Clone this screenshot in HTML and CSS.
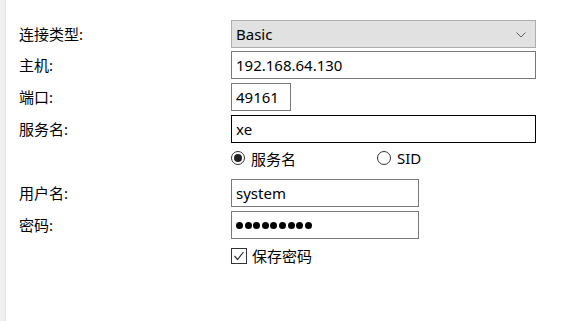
FILE: index.html
```html
<!DOCTYPE html>
<html lang="zh-CN">
<head>
<meta charset="utf-8">
<title>连接</title>
<link rel="stylesheet" href="styles.css">
</head>
<body>
<div class="page">
  <div class="strip"></div>
  <form class="form">
    <div class="row r-type">
      <div class="label">连接类型:</div>
      <div class="select">
        <span class="value">Basic</span>
        <svg class="chev" width="10" height="6" viewBox="0 0 10 6"><path d="M0.5 0.5 L5 5 L9.5 0.5" fill="none" stroke="#606060" stroke-width="1"/></svg>
      </div>
    </div>
    <div class="row r-host">
      <div class="label">主机:</div>
      <div class="input w-full">192.168.64.130</div>
    </div>
    <div class="row r-port">
      <div class="label">端口:</div>
      <div class="input w-port">49161</div>
    </div>
    <div class="row r-svc">
      <div class="label">服务名:</div>
      <div class="input w-full focused">xe</div>
    </div>
    <div class="row r-radio">
      <div class="label"></div>
      <div class="radios">
        <div class="radio-item first"><span class="radio checked"><span class="dot"></span></span><span>服务名</span></div>
        <div class="radio-item"><span class="radio"></span><span>SID</span></div>
      </div>
    </div>
    <div class="row r-user">
      <div class="label">用户名:</div>
      <div class="input w-half">system</div>
    </div>
    <div class="row r-pass">
      <div class="label">密码:</div>
      <div class="input w-half"><span class="dots"><i></i><i></i><i></i><i></i><i></i><i></i><i></i><i></i><i></i></span></div>
    </div>
    <div class="row r-check">
      <div class="label"></div>
      <div class="check-item">
        <span class="checkbox"><svg width="14" height="14" viewBox="0 0 14 14"><path d="M2.5 7 L5.5 10.5 L11.5 3" fill="none" stroke="#333" stroke-width="1.2"/></svg></span>
        <span>保存密码</span>
      </div>
    </div>
  </form>
</div>
</body>
</html>
```

FILE: styles.css
```css
html, body {
  margin: 0;
  padding: 0;
  background: #ffffff;
}
body {
  font-family: "Noto Sans", "Noto Sans CJK SC", sans-serif;
  font-size: 15px;
  color: #000;
  width: 562px;
  height: 321px;
  overflow: hidden;
}
.page {
  display: flex;
  height: 321px;
}
.strip {
  width: 5px;
  background: #f0f0f0;
  border-right: 1px solid #e4e4e4;
  flex: none;
}
.form {
  padding-left: 13px;
  padding-top: 20px;
  display: flex;
  flex-direction: column;
}
.row {
  display: grid;
  grid-template-columns: 212px auto;
  align-items: center;
}
.label {
  line-height: 20px;
  white-space: nowrap;
}
.r-host { margin-top: 3px; }
.r-port { margin-top: 4px; }
.r-svc { margin-top: 4px; }
.r-radio { margin-top: 4px; height: 22px; }
.r-user { margin-top: 10px; }
.r-pass { margin-top: 4px; }
.r-check { margin-top: 9px; height: 16px; }

.select {
  box-sizing: border-box;
  width: 305px;
  height: 28px;
  background: #e1e1e1;
  border: 1px solid #adadad;
  display: flex;
  align-items: center;
  justify-content: space-between;
  padding: 0 9px 0 4px;
}
.chev { margin-top: 1px; }
.input {
  box-sizing: border-box;
  height: 28px;
  border: 1px solid #7a7a7a;
  background: #fff;
  display: flex;
  align-items: center;
  padding-left: 4px;
  white-space: nowrap;
}
.w-full { width: 305px; }
.w-port { width: 60px; }
.w-half { width: 188px; }
.focused { border-color: #000; }

.radios {
  display: flex;
  align-items: center;
}
.radio-item {
  display: flex;
  align-items: center;
  gap: 6px;
}
.radio-item.first { width: 146px; }
.radio {
  box-sizing: border-box;
  width: 14px;
  height: 14px;
  border: 1px solid #333;
  border-radius: 50%;
  display: flex;
  align-items: center;
  justify-content: center;
}
.radio.checked { border-width: 1.5px; }
.dot {
  width: 8px;
  height: 8px;
  border-radius: 50%;
  background: #222;
}
.dots {
  display: flex;
  gap: 1.6px;
  padding-left: 0;
}
.dots i {
  width: 7px;
  height: 7px;
  border-radius: 50%;
  background: #000;
  display: block;
}
.check-item {
  display: flex;
  align-items: center;
  gap: 5px;
  height: 16px;
  line-height: 16px;
}
.checkbox {
  box-sizing: border-box;
  width: 16px;
  height: 16px;
  border: 1px solid #333;
  display: flex;
  align-items: center;
  justify-content: center;
}
```
